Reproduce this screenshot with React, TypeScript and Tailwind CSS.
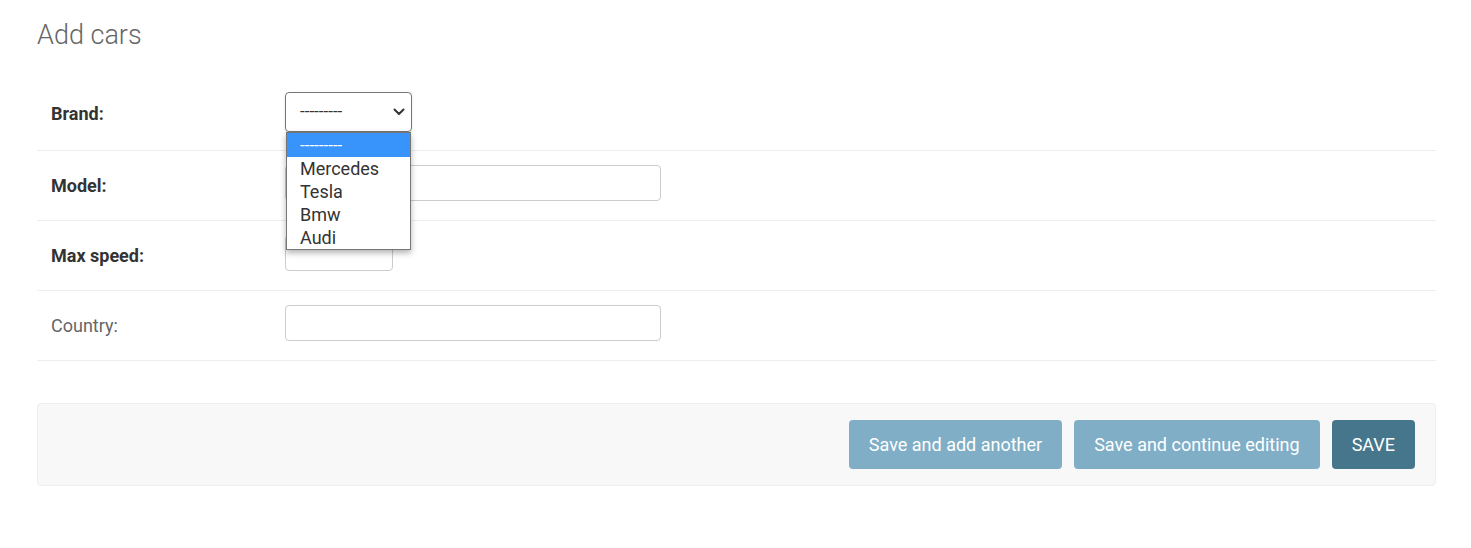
import React from "react";

// ======= DATA =======
const brands = ["---------", "Mercedes", "Tesla", "Bmw", "Audi"];

interface FieldRow {
  label: string;
  required: boolean;
  width: string;
}

const rows: FieldRow[] = [
  { label: "Model:", required: true, width: "w-[376px]" },
  { label: "Max speed:", required: true, width: "w-[108px]" },
  { label: "Country:", required: false, width: "w-[376px]" },
];

const Chevron: React.FC = () => (
  <svg width="12" height="8" viewBox="0 0 12 8" fill="none">
    <path d="M1.5 1.5 L6 6 L10.5 1.5" stroke="#333" strokeWidth="2" strokeLinecap="round" strokeLinejoin="round" />
  </svg>
);

const App: React.FC = () => {
  return (
    <div
      className="min-h-screen bg-white pl-[37px] pr-[35px]"
      style={{ fontFamily: "Roboto, 'Liberation Sans', sans-serif" }}
    >
      <h1 className="pt-[17px] h-[81px] text-[27px] font-light text-[#666] leading-[36px]">Add cars</h1>

      {/* Brand */}
      <div className="flex items-center h-[70px] border-b border-[#eee] pl-[14px]">
        <label className="w-[234px] mb-[4px] text-[18px] font-bold text-[#333]">Brand:</label>
        <div className="relative mb-[8px]">
          <div className="flex items-center justify-between w-[127px] h-[40px] border border-[#767676] rounded-[4px] pl-[14px] pr-[6px] text-[17px] text-[#333] shadow-sm">
            <span>---------</span>
            <Chevron />
          </div>
          <div className="absolute left-[1px] top-[40px] z-10 w-[125px] bg-white border border-[#767676] shadow-[0_3px_6px_rgba(0,0,0,0.3)] text-[18px] leading-[23px] text-[#333]">
            {brands.map((b, i) => (
              <div
                key={b}
                className={
                  i === 0
                    ? "bg-[#3893fa] text-white h-[24px] pl-[13px] text-[17px] leading-[24px]"
                    : "pl-[13px]"
                }
              >
                {b}
              </div>
            ))}
          </div>
        </div>
      </div>

      {rows.map((r) => (
        <div key={r.label} className="flex items-center h-[70px] border-b border-[#eee] pl-[14px]">
          <label
            className={`w-[234px] text-[18px] ${r.required ? "font-bold text-[#333]" : "text-[#666]"}`}
          >
            {r.label}
          </label>
          <input
            className={`${r.width} h-[36px] mb-[6px] border border-[#ccc] rounded-[4px] bg-white outline-none`}
          />
        </div>
      ))}

      {/* Submit row */}
      <div className="mt-[42px] flex justify-end gap-[12px] bg-[#f8f8f8] border border-[#eee] rounded-[4px] pt-[16px] pb-[16px] pr-[20px]">
        <button className="h-[49px] px-[20px] rounded-[4px] bg-[#7faec6] text-white text-[18px]">
          Save and add another
        </button>
        <button className="h-[49px] px-[20px] rounded-[4px] bg-[#7faec6] text-white text-[18px]">
          Save and continue editing
        </button>
        <button className="h-[49px] px-[20px] rounded-[4px] bg-[#46768c] text-white text-[18px]">
          SAVE
        </button>
      </div>
    </div>
  );
};

export default App;
